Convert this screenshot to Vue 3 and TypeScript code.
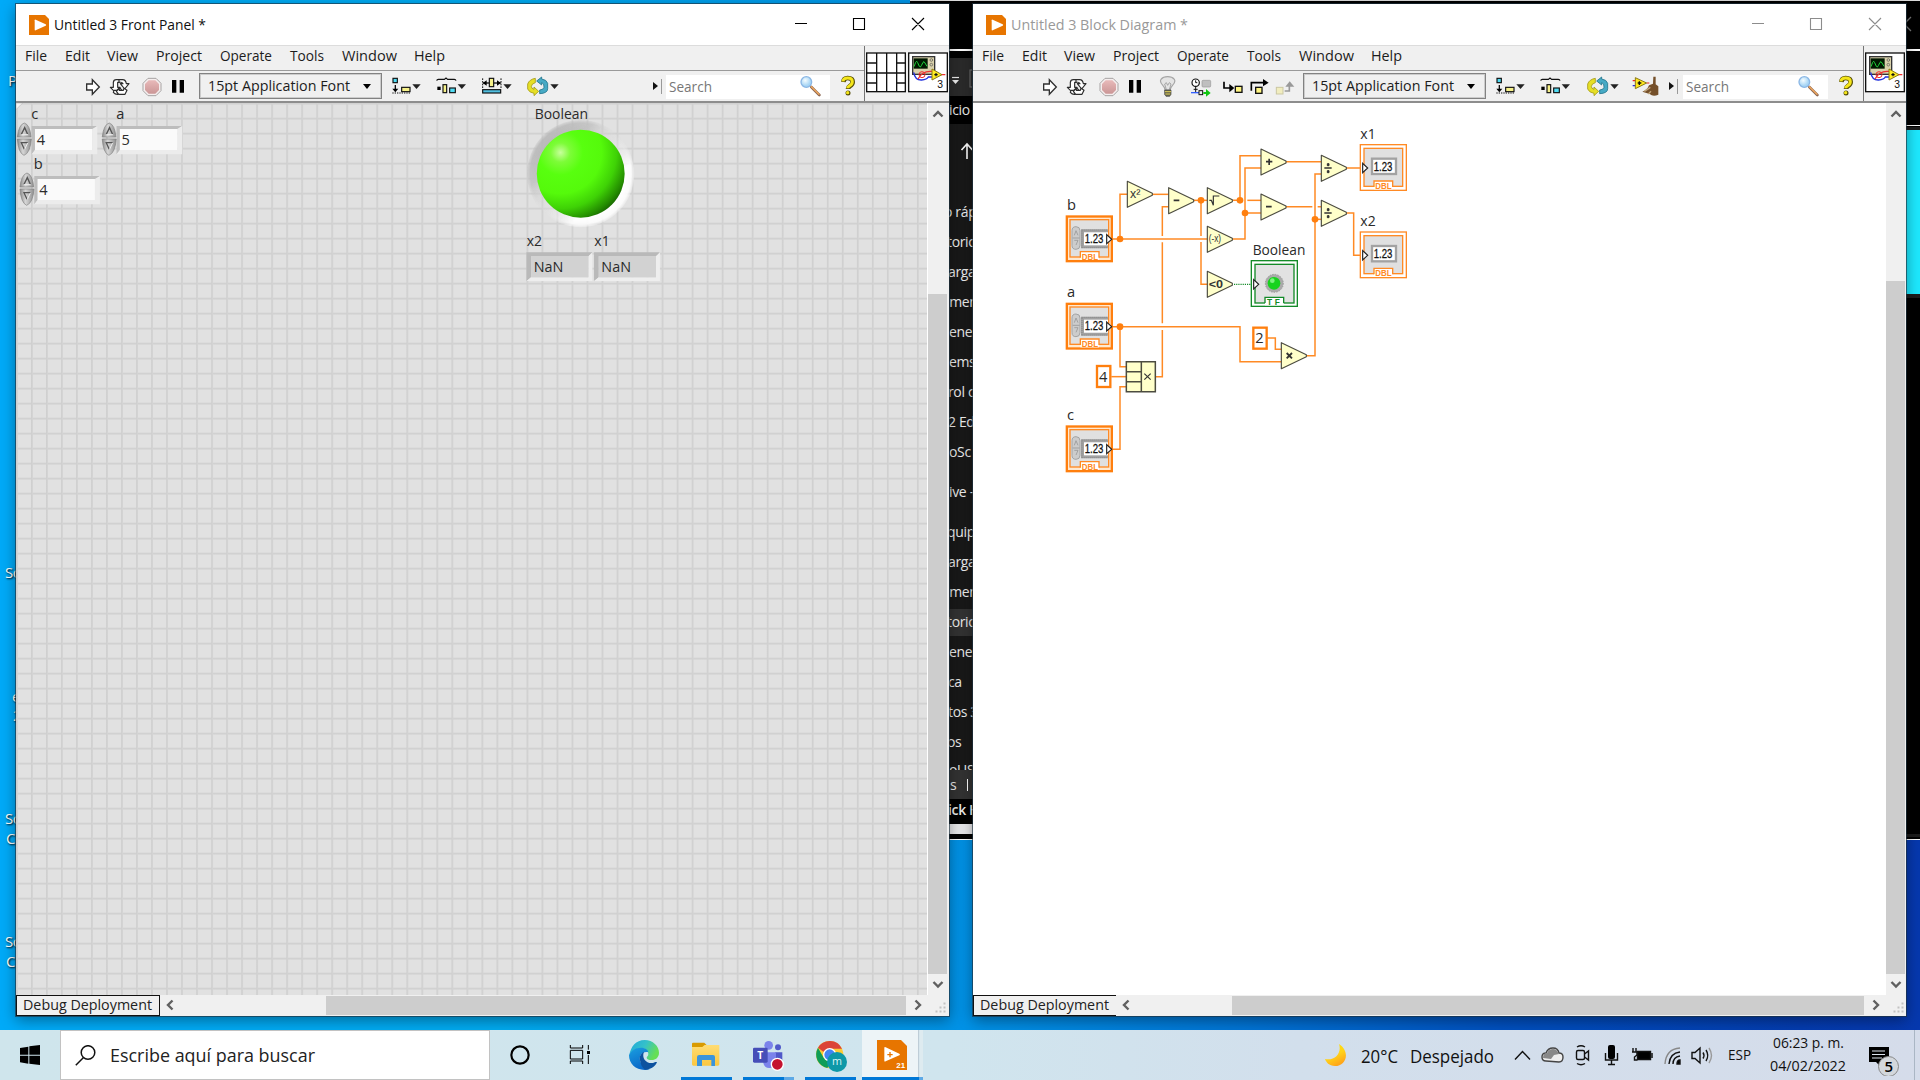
<script setup lang="ts">
import { h } from 'vue'

interface LabelProps { t: string; w: number; s?: number; c?: string; b?: number }

// One line of text fitted to a fixed advance width.
const Label = (p: LabelProps) => {
  const s = p.s ?? 15
  return h('svg', { width: p.w, height: 20, style: 'display:block;overflow:visible;flex:none' }, [
    h('text', {
      x: 0, y: 15, 'font-size': s, 'font-weight': p.b ?? 400, fill: p.c ?? '#1c1c1c', textLength: p.w,
      lengthAdjust: 'spacingAndGlyphs', 'font-family': '"Open Sans","Noto Sans",sans-serif',
    }, p.t),
  ])
}
Label.props = ['t', 'w', 's', 'c', 'b']

interface Tool { id: string; gap: number; w: number }

const menus = [
  { t: 'File', w: 22, gap: 9 }, { t: 'Edit', w: 25, gap: 18 }, { t: 'View', w: 31, gap: 17.3 },
  { t: 'Project', w: 46, gap: 17.7 }, { t: 'Operate', w: 52, gap: 18 }, { t: 'Tools', w: 34, gap: 18 },
  { t: 'Window', w: 55, gap: 18 }, { t: 'Help', w: 31, gap: 17.5 },
]
const runTools: Tool[] = [
  { id: 'run', gap: 69, w: 16 }, { id: 'loop', gap: 8, w: 22 }, { id: 'stop', gap: 9.7, w: 22 }, { id: 'pause', gap: 7.3, w: 16 },
]
const debugTools: Tool[] = [
  { id: 'bulb', gap: 16.3, w: 18 }, { id: 'highlight', gap: 12.4, w: 22 }, { id: 'into', gap: 10.3, w: 22 },
  { id: 'over', gap: 5, w: 20 }, { id: 'out', gap: 6, w: 20 },
]
const alignFront: Tool[] = [
  { id: 'align', gap: 9, w: 30 }, { id: 'dist', gap: 14.7, w: 30 }, { id: 'resize', gap: 15.7, w: 30 }, { id: 'reorder', gap: 15.3, w: 32 },
]
const alignBlock: Tool[] = [
  { id: 'align', gap: 9, w: 30 }, { id: 'dist', gap: 15, w: 30 }, { id: 'reorder', gap: 16.7, w: 32 }, { id: 'clean', gap: 13, w: 30 },
]
const windows = [
  { key: 'front', title: 'Untitled 3 Front Panel *', tw: 152, tools: runTools, align: alignFront, fontGap: 13, sepGap: 93.7, sw: 164, searchGap: 4.3 },
  { key: 'block', title: 'Untitled 3 Block Diagram *', tw: 177, tools: [...runTools, ...debugTools], align: alignBlock, fontGap: 8, sepGap: 7.3, sw: 145, searchGap: 4.3 },
]
const sideRows = [
  { y: 213, t: 'o ráp', d: -5 }, { y: 243, t: 'torio', d: -2 }, { y: 273, t: 'argas', d: -1 }, { y: 303, t: 'umen', d: -8 },
  { y: 333, t: 'enes', d: 0 }, { y: 363, t: 'ems', d: 0 }, { y: 393, t: 'rol c', d: -1 }, { y: 423, t: '2 Ed', d: -1 }, { y: 453, t: 'oSc', d: 0 },
  { y: 493, t: 'ive -', d: 0 }, { y: 533, t: 'quip', d: -2 }, { y: 563, t: 'argas', d: -1 }, { y: 593, t: 'umen', d: -8 }, { y: 623, t: 'torio', d: -2 },
  { y: 653, t: 'enes', d: 0 }, { y: 683, t: 'ca', d: -1 }, { y: 713, t: 'tos 3', d: -1 }, { y: 743, t: 'os', d: -2 },
]
const desktopLabels = [
  { t: 'P', x: 8, y: 80 }, { t: 'So', x: 5, y: 572 }, { t: 'e', x: 12, y: 696 }, { t: '2', x: 13, y: 715 },
  { t: 'So', x: 5, y: 818 }, { t: 'C', x: 6, y: 838 }, { t: 'So', x: 5, y: 941 }, { t: 'C', x: 6, y: 961 },
]
const controls = [
  { n: 'c', v: '4', x: 48, y: 365, lx: 94 }, { n: 'a', v: '5', x: 303, y: 365, lx: 349 }, { n: 'b', v: '4', x: 56, y: 515, lx: 101 },
]
const indicators = [{ n: 'x2', x: 1581 }, { n: 'x1', x: 1784 }]
const inputs = [{ n: 'b', y: 316 }, { n: 'a', y: 578 }, { n: 'c', y: 946 }]
const outputs = [{ n: 'x1', y: 102 }, { n: 'x2', y: 364 }]
const nodes = [
  { x: 232, y: 214 }, { x: 356, y: 233 }, { x: 472, y: 233 }, { x: 472, y: 349 }, { x: 472, y: 484 },
  { x: 633, y: 117 }, { x: 633, y: 252 }, { x: 814, y: 136 }, { x: 814, y: 271 }, { x: 694, y: 698 },
]
const wires = [
  'M453 271V378M453 396V523H472', 'M316 800H337V660M337 640V397M337 378V290H357', 'M188 387H472', 'M210 387V253H232',
  'M305 253H357', 'M432 271H472', 'M548 271H570V137H633', 'M592 271H633', 'M548 387H585V174H633', 'M585 309H633',
  'M708 155H813', 'M708 290H787M803 290H813', 'M768 737H795V192H813', 'M795 328H813', 'M888 174H930', 'M888 309H911V436H930',
  'M188 650H570V755H695', 'M210 650V770H228', 'M184 800H228', 'M188 1018H210V830H228', 'M652 684H676V718H695',
]
const joints = [[210, 387], [453, 271], [570, 271], [585, 309], [795, 328], [210, 650]]
</script>

<template>
  <div class="desktop">
    <svg width="0" height="0" class="defs">
      <defs>
        <radialGradient id="led" cx=".27" cy=".26" r=".85"><stop offset="0" stop-color="#c8ff9c" /><stop offset=".13" stop-color="#7dfc38" /><stop offset=".3" stop-color="#58ff0f" /><stop offset=".55" stop-color="#55fa0b" /><stop offset=".75" stop-color="#3fd206" /><stop offset=".92" stop-color="#238b00" /><stop offset="1" stop-color="#165e00" /></radialGradient>
        <linearGradient id="ring" x1=".14" y1=".14" x2=".86" y2=".86"><stop offset="0" stop-color="#b4b4b4" /><stop offset=".25" stop-color="#c2c2c2" /><stop offset=".46" stop-color="#dadada" stop-opacity=".3" /><stop offset=".6" stop-color="#eee" stop-opacity=".5" /><stop offset=".76" stop-color="#fff" /><stop offset="1" stop-color="#fff" /></linearGradient>
        <radialGradient id="ringFade"><stop offset=".8" stop-color="#fff" /><stop offset=".93" stop-color="#fff" stop-opacity=".85" /><stop offset="1" stop-color="#fff" stop-opacity=".1" /></radialGradient>
        <mask id="ringMask"><circle cx="1744" cy="521" r="163" fill="url(#ringFade)" /></mask>
        <linearGradient id="metal" x1="0" x2="1"><stop offset="0" stop-color="#8c8c8c" /><stop offset=".4" stop-color="#d6d6d6" /><stop offset="1" stop-color="#8e8e8e" /></linearGradient>
        <linearGradient id="red" x1="0" y1="0" x2="0" y2="1"><stop offset="0" stop-color="#e8b9b9" /><stop offset="1" stop-color="#cb9696" /></linearGradient>
        <radialGradient id="glass" cx=".4" cy=".35"><stop offset="0" stop-color="#f4fcff" /><stop offset="1" stop-color="#a8d6f5" /></radialGradient>
        <linearGradient id="edgeA" x1="0" y1="0" x2="1" y2=".4"><stop offset="0" stop-color="#1fa7dc" /><stop offset=".55" stop-color="#35c1c9" /><stop offset="1" stop-color="#65df55" /></linearGradient>
        <linearGradient id="edgeB" x1="0" y1="0" x2=".4" y2="1"><stop offset="0" stop-color="#1a9fe0" /><stop offset="1" stop-color="#0a68c8" /></linearGradient>
        <linearGradient id="moon" x1="0" y1="0" x2=".5" y2="1"><stop offset="0" stop-color="#ffe600" /><stop offset=".6" stop-color="#ffd21a" /><stop offset="1" stop-color="#ffa61a" /></linearGradient>
        <linearGradient id="folder" x1="0" y1="0" x2="0" y2="1"><stop offset="0" stop-color="#ffdc73" /><stop offset="1" stop-color="#fbc740" /></linearGradient>
      </defs>
      <symbol id="run" viewBox="255 213 48 90"><path d="M260 252h17v-13l21 22-21 22v-13h-17z" fill="#fff" stroke="#303030" stroke-width="4" /></symbol>
      <symbol id="loop" viewBox="327 213 66 90"><g fill="#fff" stroke="#2c2c2c" stroke-width="3.5" stroke-linejoin="round"><path d="M340 262v-15q1-8 9-8h14l-5 8h-5v15h7l-14 15-15-15z" /><path d="M357 239h11q9 0 11 12h8l-13 16-13-16h8q-2-5-12-5z" /><path d="M340 277q5 6 12 6h2v-6l14-3-9-11-9 8h-8z" /><path d="M372 265l9 6-6 12h-19l-7-9 9-9v6h12z" /></g></symbol>
      <symbol id="stop" viewBox="422 213 66 90"><path d="M443 235h24l15 15v22l-15 15h-24l-15-15v-22z" fill="#f5eeee" stroke="#a6a3a3" stroke-width="3" /><path d="M445 241h20l11 11v18l-11 11h-20l-11-11v-18z" fill="url(#red)" /></symbol>
      <symbol id="pause" viewBox="510 213 48 90"><path d="M516 240h13v38h-13zM539 240h13v38h-13z" fill="#000" /></symbol>
      <symbol id="bulb" viewBox="598 213 54 90"><path d="M616 270q0-7-6-13c-17-17-2-27 14-27s31 10 14 27q-6 6-6 13z" fill="#e4e4e4" stroke="#a5a5a5" stroke-width="3.5" /><path d="M620 269l-5-17 5-4 4 8 5-8 5 4-5 17" fill="none" stroke="#999" stroke-width="2.5" /><path d="M615 270h19v13l-4 6h-11l-4-6z" fill="#66664e" stroke="#444" stroke-width="2" /><path d="M616 275h18M617 282h15" stroke="#e0cf58" stroke-width="3" /></symbol>
      <symbol id="highlight" viewBox="689 213 66 90"><circle cx="706" cy="248" r="11" fill="#fff" stroke="#111" stroke-width="3.5" /><path d="M706 241v7h5" fill="none" stroke="#111" stroke-width="3" /><path d="M706 259v18M700 268h12" stroke="#111" stroke-width="3" /><rect x="725" y="241" width="26" height="20" rx="3" fill="#bfbfbf" stroke="#999" stroke-width="2" /><path d="M692 278h24" stroke="#3461ff" stroke-width="4" /><rect x="716" y="272" width="11" height="12" fill="#eee" stroke="#111" stroke-width="3" /><path d="M729 276h8v-9l14 12-14 11v-8h-8z" fill="#11c611" /></symbol>
      <symbol id="into" viewBox="786 213 66 90"><path d="M792 245v19h22" fill="none" stroke="#000" stroke-width="5" /><path d="M808 252l15 12-15 13z" /><rect x="826" y="259" width="20" height="18" fill="#fff582" stroke="#111" stroke-width="4" /></symbol>
      <symbol id="over" viewBox="867 213 60 90"><path d="M874 272v-24h38" fill="none" stroke="#000" stroke-width="5" /><path d="M909 237l17 11-17 11z" /><rect x="887" y="262" width="19" height="18" fill="#fff582" stroke="#111" stroke-width="4" /></symbol>
      <symbol id="out" viewBox="945 213 60 90"><path d="M974 273h14v-16" fill="none" stroke="#999" stroke-width="5" /><path d="M976 260l13-16 14 16z" fill="#999" /><rect x="949" y="262" width="20" height="20" fill="#f1edbf" stroke="#cbc7a3" stroke-width="3" /></symbol>
      <symbol id="align" viewBox="1174 213 90 90"><rect x="1180" y="235" width="13" height="13" fill="#50dcf4" stroke="#111" stroke-width="3.5" /><path d="M1187 255v15" stroke="#111" stroke-width="4" /><path d="M1178 266h18l-9 11z" /><path d="M1178 279h56" stroke="#111" stroke-width="3.5" stroke-dasharray="4 3" /><rect x="1206" y="262" width="25" height="13" fill="#f7f28a" stroke="#111" stroke-width="3.5" /><path d="M1238 253h25l-12.500 14z" fill="#222" /></symbol>
      <symbol id="dist" viewBox="1308 213 90 90"><path d="M1310 242q1-4 5-4h18l5-4 5 4h20q4 0 5 4" fill="none" stroke="#111" stroke-width="3.5" /><rect x="1312" y="260" width="10" height="10" /><rect x="1329" y="254" width="11" height="24" fill="#f7f28a" stroke="#111" stroke-width="3.5" /><rect x="1349" y="264" width="17" height="14" fill="#50dcf4" stroke="#111" stroke-width="3.5" /><path d="M1373 253h25l-12.500 14z" fill="#222" /></symbol>
      <symbol id="resize" viewBox="1445 213 90 90"><path d="M1447 235v30M1502 235v30" stroke="#111" stroke-width="3" stroke-dasharray="5 3" /><path d="M1448 249h53" stroke="#111" stroke-width="4" /><path d="M1447 249l12-8v16zM1502 249l-12-8v16z" /><rect x="1467" y="235" width="13" height="25" fill="#f7f28a" stroke="#111" stroke-width="3.5" /><rect x="1447" y="269" width="54" height="10" fill="#50bfe0" stroke="#111" stroke-width="3.5" /><path d="M1509 253h25l-12.500 14z" fill="#222" /></symbol>
      <symbol id="reorder" viewBox="1581 213 96 90"><path d="M1606 235q-18 3-23 17v15q5 11 19 13v7l14-13-14-13v7q-8-2-8-9 1-8 12-11z" fill="#e6df25" stroke="#a39a1a" stroke-width="2.5" /><path d="M1625 231l-15 12 15 12v-7q8 2 7 14-1 7-13 8v11q24-1 24-15v-16q-3-11-18-13z" fill="#47aac5" stroke="#20738b" stroke-width="2.5" /><path d="M1651 253h25l-12.500 14z" fill="#222" /></symbol>
      <symbol id="clean" viewBox="578 213 90 90"><path d="M580 257h12" stroke="#1717dd" stroke-width="3.5" /><path d="M580 242h10M622 249h8" stroke="#e22" stroke-width="3.5" /><path d="M588 233l34 16-34 17z" fill="#ffe71d" stroke="#8c7a15" stroke-width="3" /><path d="M595 249h11M600 244v11" stroke="#111" stroke-width="4" /><path d="M642 230h7v23l8 6v25q-16 7-26-2l-22-7q14-4 20-19l12-5z" fill="#75502a" /><path d="M615 274l18-12M627 282l8-8" stroke="#c1a67d" stroke-width="4" /></symbol>
      <symbol id="lens" viewBox="957 213 66 90"><path d="M994 261l24 24" stroke="#8a6550" stroke-width="8" stroke-linecap="round" /><path d="M994 260l23 23" stroke="#f0a85e" stroke-width="4" stroke-linecap="round" /><circle cx="979" cy="246" r="16" fill="url(#glass)" stroke="#8bb7e5" stroke-width="4" /></symbol>
      <symbol id="help" viewBox="1080 213 48 90"><path d="M1090 246q1-12 13-12 15 0 15 12 0 7-8 12-6 4-6 9" fill="none" stroke="#554d08" stroke-width="14" /><circle cx="1104" cy="279" r="7.500" fill="#554d08" /><path d="M1089 244q1-10 14-10 14 0 14 11 0 7-8 12-6 4-6 8" fill="none" stroke="#f4e51a" stroke-width="9" /><circle cx="1103" cy="278" r="5" fill="#f4e51a" /></symbol>
      <symbol id="vi" viewBox="1284 156 120 123"><rect x="1286" y="159" width="116" height="116" fill="#fff" stroke="#111" stroke-width="4" /><rect x="1298" y="170" width="66" height="53" fill="#d9d1ab" stroke="#333" stroke-width="4" /><rect x="1301" y="175" width="42" height="31" fill="#001800" /><path d="M1302 200l5-13q3-7 6 1l5 11q3 5 6-2l5-10q3-5 6 2l6 10" fill="none" stroke="#20d23a" stroke-width="3" /><circle cx="1354" cy="180" r="4" fill="none" stroke="#555" stroke-width="2" /><circle cx="1354" cy="194" r="4" fill="none" stroke="#555" stroke-width="2" /><path d="M1301 217q4 24 24 23 16-1 20-9h22" fill="none" stroke="#2332dd" stroke-width="4" /><path d="M1314 237q12-23 36-23h8M1380 224h16" fill="none" stroke="#f03030" stroke-width="4" /><circle cx="1326" cy="224" r="9" fill="none" stroke="#f03030" stroke-width="3" /><path d="M1356 207l30 17-30 16z" fill="#ffed22" stroke="#8d7b17" stroke-width="3" /><path d="M1363 224h10M1368 219v10" stroke="#111" stroke-width="3.5" /><text x="1372" y="265" font-size="31" textLength="17" font-family="Liberation Sans, sans-serif" fill="#111">3</text></symbol>
      <symbol id="panes" viewBox="1159 156 120 123"><rect x="1161" y="159" width="116" height="116" fill="#fff" stroke="#111" stroke-width="4" /><path d="M1191 159v116M1221 159v116M1251 159v116M1161 219h116M1161 189h30M1161 249h30M1251 189h26M1251 249h26" stroke="#111" stroke-width="4" /></symbol>
      <symbol id="lv" viewBox="0 0 60 60"><path d="M0 0h48l12 12v48H0z" fill="#e77500" /><path d="M17 16q0-3 3-2l30 14q3 2 0 4L20 46q-3 1-3-2z" fill="#fff" /></symbol>
    </svg>

    <span v-for="(d, i) in desktopLabels" :key="i" class="dlabel" :style="{ left: d.x + 'px', top: d.y - 11 + 'px' }">{{ d.t }}</span>

    <div class="backapp">
      <div class="bar1"></div>
      <div class="side">
        <div class="ribbon"><svg width="24" height="38"><path d="M4 19.500h7" stroke="#eee" stroke-width="1.200" /><path d="M4 22h7l-3.500 4z" fill="#eee" /><rect x="22" y="12" width="8" height="17" fill="none" stroke="#777" /></svg></div>
        <div class="tab">icio</div>
        <div class="list">
          <svg class="up" width="24" height="22"><path d="M19 19V4M13.500 10l5.500-6 5.500 6" fill="none" stroke="#fff" stroke-width="1.600" /></svg>
          <span v-for="r in sideRows" :key="r.y" class="row" :class="{ on: r.y === 623 }" :style="{ top: r.y - 138 + 'px', textIndent: r.d + 'px' }">{{ r.t }}</span>
          <span class="row cut">oUS</span>
        </div>
        <div class="status">s<i></i></div>
        <div class="click">ick H</div>
        <div class="edge"></div>
      </div>
      <div class="right"><svg width="15" height="46"><path d="M-1 23l7-7M-1 23l7 7" stroke="#777" stroke-width="1.300" fill="none" /></svg><div class="cyan"></div><div class="foot"></div></div>
    </div>

    <section v-for="w in windows" :key="w.key" class="win" :class="w.key">
      <header class="title">
        <svg width="20" height="20" class="logo"><use href="#lv" /></svg>
        <Label :t="w.title" :w="w.tw" :s="15" :c="w.key === 'front' ? '#111' : '#999'" />
        <svg class="sys" width="137" height="41" :stroke="w.key === 'front' ? '#000' : '#8c8c8c'" fill="none"><path d="M4 19.500h12M62.500 14.500h11v11h-11zM121 14l12 12M133 14l-12 12" stroke-width="1.100" /></svg>
      </header>
      <div class="head">
        <div class="bars">
          <nav class="menu"><Label v-for="m in menus" :key="m.t" :t="m.t" :w="m.w" :s="14.800" :style="{ marginLeft: m.gap + 'px' }" /></nav>
          <div class="tools">
            <svg v-for="t in w.tools" :key="t.id" :width="t.w" height="30" :style="{ marginLeft: t.gap + 'px' }"><use :href="'#' + t.id" /></svg>
            <div class="font" :style="{ marginLeft: w.fontGap + 'px' }"><Label t="15pt Application Font" :w="142" :s="15" /><svg width="8" height="5"><path d="M0 0h8l-4 5z" /></svg></div>
            <svg v-for="t in w.align" :key="t.id" :width="t.w" height="30" :style="{ marginLeft: t.gap + 'px' }"><use :href="'#' + t.id" /></svg>
            <svg width="9" height="30" :style="{ marginLeft: w.sepGap + 'px' }"><path d="M0 11v8l5-4z" fill="#111" /><path d="M8.500 8v15" stroke="#999" /></svg>
            <div class="search" :style="{ width: w.sw + 'px', marginLeft: w.searchGap + 'px' }"><Label t="Search" :w="43" :s="15" c="#777" /><svg class="lens" width="22" height="30"><use href="#lens" /></svg></div>
            <svg class="q" width="16" height="30"><use href="#help" /></svg>
          </div>
        </div>
        <div class="panes"><svg v-if="w.key === 'front'" width="40" height="41"><use href="#panes" /></svg><svg width="40" height="41"><use href="#vi" /></svg></div>
      </div>

      <div class="body">
        <svg v-if="w.key === 'front'" class="canvas grid" viewBox="48 309 2736 2676" width="912" height="892" preserveAspectRatio="none">
          <path d="M48 309h20l-20 20z" fill="#f4f4f4" stroke="#bbb" stroke-width="2" />
          <g v-for="c in controls" :key="c.n">
            <text :x="c.lx" :y="c.y - 9" class="t45">{{ c.n }}</text>
            <g :transform="`translate(${c.x} ${c.y})`">
              <path d="M47 13h197l-12 9H57v63l-10 13z" fill="#bdbdbd" />
              <path d="M244 13v85H47l10-13h172V22z" fill="#ececec" />
              <rect x="57" y="22" width="172" height="63" fill="#fafafa" />
              <path d="M25 4q17 5 20 42H4Q8 9 25 4zM4 52h42q-3 42-22 49Q7 94 4 52z" fill="url(#metal)" stroke="#808080" stroke-width="2" />
              <path d="M16 38l10-20 9 20" fill="none" stroke="#555" stroke-width="4" /><path d="M16 39h20" stroke="#eee" stroke-width="3" />
              <path d="M35 63H16l9 20" fill="none" stroke="#555" stroke-width="4" /><path d="M26 83l9-19" stroke="#eee" stroke-width="3" />
              <text x="62" y="70" class="t45">{{ c.v }}</text>
            </g>
          </g>
          <circle cx="1744" cy="521" r="161" fill="url(#ring)" mask="url(#ringMask)" />
          <circle cx="1744" cy="521" r="132" fill="url(#led)" />
          <text x="1606" y="356" textLength="160" lengthAdjust="spacingAndGlyphs" class="t45">Boolean</text>
          <g v-for="n in indicators" :key="n.n">
            <text :x="n.x + 1" y="739" textLength="46" lengthAdjust="spacingAndGlyphs" class="t45">{{ n.n }}</text>
            <g :transform="`translate(${n.x} 757)`"><path d="M0 0h198l-12 12H14v63L0 87z" fill="#b9b9b9" /><path d="M198 0v86H0l14-11h172V12z" fill="#eee" /><rect x="14" y="11" width="172" height="64" fill="#d2d2d2" /><text x="22" y="60" textLength="89" lengthAdjust="spacingAndGlyphs" class="t45">NaN</text></g>
          </g>
        </svg>

        <svg v-else class="canvas" viewBox="-231 -21 2739 2676" width="913" height="892">
          <g fill="none" stroke="#ff8a24" stroke-width="4.500"><path v-for="p in wires" :key="p" :d="p" /></g>
          <path d="M552 523h52" stroke="#138a28" stroke-width="3.500" stroke-dasharray="3.500 3" />
          <circle v-for="j in joints" :key="j.join()" :cx="j[0]" :cy="j[1]" r="10" fill="#ff7f0e" />
          <path v-for="(n, i) in nodes" :key="i" :d="`M${n.x} ${n.y}l75 36v6l-75 36z`" fill="#ffffca" stroke="#4c4c40" stroke-width="3.500" stroke-linejoin="round" />
          <text x="240" y="265" class="sym" font-size="36" textLength="31" lengthAdjust="spacingAndGlyphs">x²</text>
          <path d="M371 271h17M648 290h17M648 155h19M657.500 146v19M823 174h22M823 309h22" stroke="#333" stroke-width="5" />
          <path d="M832 161h5v6h-5zM832 182h5v6h-5zM832 296h5v6h-5zM832 317h5v6h-5z" stroke="#333" stroke-width="3" fill="#333" />
          <path d="M710 729l16 16M726 729l-16 16" stroke="#333" stroke-width="5.500" />
          <path d="M478 271h6l6 15v-28h18" fill="none" stroke="#333" stroke-width="3.500" />
          <text x="476" y="397" class="sym" font-size="33" textLength="37" lengthAdjust="spacingAndGlyphs">(-x)</text>
          <text x="476" y="535" font-weight="700" class="sym" font-size="34" textLength="43" lengthAdjust="spacingAndGlyphs">&lt;0</text>
          <path d="M229 755h87v90h-87zM274 755v90M229 785h45M229 815h45" fill="#ffffca" stroke="#4c4c40" stroke-width="4.500" />
          <path d="M283 791l19 18M302 791l-19 18" stroke="#333" stroke-width="3.500" />
          <g fill="#fff" stroke="#ff7f0e" stroke-width="7"><rect x="610" y="653" width="40" height="63" /><rect x="141" y="768" width="40" height="63" /></g>
          <text x="616" y="700" class="t45">2</text><text x="147" y="816" class="t45">4</text>

          <g v-for="n in inputs" :key="n.n" :transform="`translate(47 ${n.y})`">
            <text x="4" y="-17" class="t45">{{ n.n }}</text>
            <rect x="3.500" y="3.500" width="135" height="134" fill="#ffe9d0" stroke="#ff7f0e" stroke-width="7" />
            <rect x="13" y="13" width="116" height="112" fill="#e0e0e0" stroke="#ff8a24" stroke-width="4" />
            <path d="M46 42h81v10H56v37h71v10H46z" fill="#a2a2a2" />
            <path d="M48 44h78M48 97h78M49 46v50" stroke="#858585" stroke-width="3" stroke-dasharray="3 3" />
            <rect x="55" y="51" width="72" height="39" fill="#fff" />
            <rect x="19" y="34" width="24" height="68" rx="12" fill="#ccc" stroke="#a4a4a4" stroke-width="3" /><path d="M26 60l5-14 6 14M26 75h11l-6 14M21 68h21" fill="none" stroke="#999" stroke-width="2.500" />
            <text x="57" y="83" textLength="56" lengthAdjust="spacingAndGlyphs" class="num">1.23</text>
            <path d="M123 58v27l15-13z" fill="#fff" stroke="#222" stroke-width="3.500" />
            <path d="M44 134v-25h56v25z" fill="#fff" /><path d="M44 127v-18h56v18" fill="none" stroke="#ff8a24" stroke-width="4" /><text x="48" y="133" textLength="49" lengthAdjust="spacingAndGlyphs" class="tag">DBL</text>
          </g>
          <g v-for="n in outputs" :key="n.n" :transform="`translate(929 ${n.y})`">
            <text x="2" y="-16" textLength="46" lengthAdjust="spacingAndGlyphs" class="t45">{{ n.n }}</text>
            <rect x="2" y="2" width="138" height="137" fill="#fff" stroke="#ff8a24" stroke-width="4" />
            <rect x="13" y="13" width="116" height="114" fill="#e0e0e0" stroke="#ff8a24" stroke-width="4" />
            <rect x="37" y="44" width="72" height="46" fill="#fff" stroke="#a2a2a2" stroke-width="7" />
            <text x="42" y="81" textLength="56" lengthAdjust="spacingAndGlyphs" class="num">1.23</text>
            <path d="M9 58v28l15-14z" fill="#fff" stroke="#222" stroke-width="3.500" />
            <path d="M43 136v-25h56v25z" fill="#fff" /><path d="M43 129v-18h56v18" fill="none" stroke="#ff8a24" stroke-width="4" /><text x="47" y="135" textLength="49" lengthAdjust="spacingAndGlyphs" class="tag">DBL</text>
          </g>
          <g transform="translate(602 450)">
            <text x="6" y="-16" textLength="158" lengthAdjust="spacingAndGlyphs" class="t45">Boolean</text>
            <rect x="2" y="2" width="138" height="137" fill="#fff" stroke="#138a28" stroke-width="4" />
            <rect x="13" y="13" width="117" height="116" fill="#e2e2e2" stroke="#138a28" stroke-width="4" />
            <circle cx="71" cy="70" r="27" fill="#aaa" stroke="#999" stroke-width="3" stroke-dasharray="4 4" /><circle cx="70" cy="70" r="19" fill="#17d31d" /><circle cx="65" cy="62" r="7" fill="#7cf27e" />
            <path d="M9 59v28l15-14z" fill="#fff" stroke="#222" stroke-width="3.500" />
            <path d="M43 136v-24h56v24z" fill="#fff" /><path d="M43 129v-17h56v17" fill="none" stroke="#138a28" stroke-width="4" /><text x="49" y="134" class="tag tf">TF</text>
          </g>
        </svg>
        <div class="vs"><svg width="20" height="22"><path d="M5.500 13.500l4.500-4.500 4.500 4.500" /></svg><div class="vthumb"></div><svg width="20" height="21"><path d="M5.500 8l4.500 4.500 4.500-4.500" /></svg></div>
      </div>
      <footer class="hs">
        <div class="dd"><Label t="Debug Deployment" :w="129" :s="14.800" c="#222" /></div>
        <svg class="la" width="14" height="20"><path d="M9.500 5.500l-4.500 4.500 4.500 4.500" /></svg>
        <div class="hthumb"></div>
        <svg width="42" height="20"><path d="M9.500 5.500l4.500 4.500-4.500 4.500" /><path d="M29 15h3v3h-3zM33 15h3v3h-3zM37 15h3v3h-3zM33 11h3v3h-3zM37 11h3v3h-3zM37 7h3v3h-3z" class="grip" /></svg>
      </footer>
    </section>

    <div class="taskbar">
      <div class="start"><svg width="20" height="20" viewBox="0 0 60 60"><path d="M0 9l25-4v24H0zM28 4l32-4v29H28zM0 32h25v24L0 52zM28 32h32v28l-32-4z" /></svg></div>
      <div class="find"><svg width="21" height="21"><g fill="none" stroke="#111" stroke-width="1.500"><circle cx="13" cy="7.500" r="6.800" /><path d="M8.500 12.500L.8 20.200" /></g></svg><Label t="Escribe aquí para buscar" :w="205" :s="19" c="#222" /></div>
      <svg class="apps" width="433" height="50" viewBox="30 210 1299 150">
        <rect x="1146" y="210" width="169" height="142" fill="#edf4f7" /><path d="M1316 210v142" stroke="#b9c8d2" stroke-width="3" /><rect x="1318" y="210" width="11" height="142" fill="#deebf0" />
        <circle cx="120" cy="285" r="26" fill="none" stroke="#000" stroke-width="6.500" />
        <path d="M271 255v9h37v-9M271 312v-9h37v9M271 271h37v26h-37zM325 255v14M325 285v27" fill="none" stroke="#000" stroke-width="3" /><rect x="321" y="273" width="9" height="9" />
        <path d="M448 286c4-27 20-46 46-46 25 0 43 19 43 38 0 14-10 22-22 22-9 0-15-3-15-7 0-3 5-4 5-11 0-10-9-17-20-17-17 0-31 8-37 21z" fill="url(#edgeA)" />
        <path d="M447 286c5-13 18-23 36-23 14 0 22 8 22 14-18-4-28 10-25 24 3 15 17 22 29 27-35 8-62-12-62-42z" fill="url(#edgeB)" />
        <path d="M480 301c-3-11 2-20 12-26-8 19 6 36 26 34 6-1 10-4 13-2-7 15-23 23-36 22-9-6-13-16-15-28z" fill="#0d529f" />
        <path d="M636 250q0-2 3-2h34l6 6v20h-43z" fill="#d99a00" /><path d="M636 261h31l7-6h44v58q0 4-4 4h-74q-4 0-4-4z" fill="url(#folder)" /><path d="M651 318v-27q0-6 7-6h41q6 0 6 6v27h-11v-18h-28v18z" fill="#3b94dc" />
        <circle cx="866" cy="256" r="13" fill="#7b83eb" /><circle cx="894" cy="262" r="9" fill="#5059c9" /><path d="M885 277h22v23q0 12-12 18h-15z" fill="#5059c9" /><path d="M850 277h38v32q-3 15-20 15-15 0-18-15z" fill="#7b83eb" /><rect x="819" y="263" width="44" height="45" rx="4" fill="#464eb8" /><text x="832" y="296" font-family="Open Sans, sans-serif" font-size="31" font-weight="700" fill="#fff">T</text><circle cx="892" cy="313" r="18" fill="#c4122f" stroke="#fff" stroke-width="4" />
        <circle cx="1049" cy="284" r="41" fill="#fccb35" /><path d="M1014 263a41 41 0 0 1 72 3h-37l-19 9z" fill="#db4437" /><path d="M1014 263a41 41 0 0 0 28 61l17-30-28-1z" fill="#0f9d58" /><circle cx="1049" cy="284" r="18" fill="#4285f4" stroke="#fff" stroke-width="4" /><circle cx="1071" cy="306" r="30" fill="#0e98a8" /><text x="1056" y="315" font-family="Open Sans, sans-serif" font-size="34" textLength="30" lengthAdjust="spacingAndGlyphs" fill="#dff5f5">m</text>
        <path d="M1191 240h72l18 18v72h-90z" fill="#e77500" /><path d="M1213 264q0-4 4-2l41 19q4 3 0 5l-41 18q-4 2-4-2z" fill="#fff" /><path d="M1222 284h16M1230 276v16" stroke="#e77500" stroke-width="4" /><text x="1249" y="324" font-family="Liberation Sans, sans-serif" font-size="24" font-weight="700" fill="#fff">21</text>
        <path d="M603 351h153v9h-153zM789 351h123v9h-123zM975 351h153v9h-153zM1146 351h171v9h-171z" fill="#0078d7" /><path d="M912 351h30v9h-30zM1317 351h12v9h-12z" fill="#5ea9e6" />
      </svg>
      <div class="tray">
        <svg width="22" height="24" viewBox="0 0 22 24"><path d="M14 1c12 8 7 22-4 22C4 23 1 19 0 16c10 2 17-6 14-15z" fill="url(#moon)" /></svg>
        <Label class="deg" t="20°C" :w="37" :s="18" c="#111" /><Label class="desp" t="Despejado" :w="84" :s="18" c="#111" />
        <svg class="icons" width="200" height="30" fill="none" stroke="#111" stroke-width="1.400">
          <path d="M1 19.500l7.500-8 7.500 8" />
          <path d="M32 21q-4 0-4-4t4-4q2-5 7-5t6 5q4 0 4 4 0 5-4 5z" fill="#eee" stroke="#444" stroke-width="1.400" /><path d="M33 13q2-4 6-4t6 5l-5 1-3 4-8-1q0-5 4-5z" fill="#888" stroke="none" />
          <rect x="62.500" y="10.500" width="8" height="9" rx="1.500" /><path d="M70.500 14l4-3v9l-4-3M63 7q4-2.500 8 0M63 23.500q4 2.500 8 0" />
          <rect x="94" y="5" width="7" height="14" rx="2" fill="#000" stroke="none" /><path d="M91.500 13v7h12v-7M97.500 20v4M94 24.500h7" />
          <path d="M123.500 11.500h13v8h-13z" fill="#000" /><path d="M138 13v5" stroke-width="1.500" /><path d="M119 8v4M122 8v4M118 12h5v3l-2.500 2v3h3" />
          <path d="M151 24q1-15 15-16" stroke="#888" /><path d="M155 24q1-11 11-12M159 24q0-7 7-8" /><path d="M163 24q0-4 3-4v4z" fill="#000" />
          <path d="M178 12.500h3l5-4.500v15l-5-4.500h-3z" /><path d="M189 12.500q2 3 0 6M192 10q3.500 5.500 0 11" /><path d="M195 8q5 7.500 0 15" stroke="#999" />
        </svg>
        <Label class="esp" t="ESP" :w="23" :s="14.500" c="#111" />
        <div class="clock"><Label t="06:23 p. m." :w="71" :s="15" c="#111" /><Label t="04/02/2022" :w="76" :s="15" c="#111" /></div>
        <svg class="note" width="34" height="34"><path d="M1 5h20v15h-8v5l-5-5H1z" fill="#000" /><path d="M4 9h13M4 12.500h13M4 16h10" stroke="#dce3ed" /><circle cx="20.500" cy="24.500" r="10" fill="#d3d7dc" stroke="#888" /><text x="16.500" y="30" font-size="15" font-weight="600" font-family="Open Sans, sans-serif">5</text></svg>
      </div>
    </div>
  </div>
</template>

<style>
html, body { overflow: hidden; }
</style>
<style scoped>
* { box-sizing: border-box; }
.desktop { position: relative; width: 1920px; height: 1080px; overflow: hidden; font-family: "Open Sans", "Noto Sans", sans-serif; background: linear-gradient(90deg, #00aaf8 0, #00aaf0 500px, #0092e6 960px, #0073d4 1250px, #0050bf 1500px, #043cb0 1800px, #0638ae 1920px); }
.defs { position: absolute; }
svg { flex: none; }
.dlabel { position: absolute; color: #fff; font-size: 15px; line-height: 22px; letter-spacing: -.5px; text-shadow: 1px 1px 2px #000; }
.backapp { position: absolute; left: 910px; top: 0; width: 1010px; height: 840px; background: #000; border-bottom: 1px solid #fff; border-top: 1px solid #ddd; display: flex; justify-content: space-between; }
.bar1 { position: absolute; top: 48px; left: 0; right: 0; height: 2px; background: #fff; }
.side { width: 26px; margin-left: 38px; padding-top: 57px; overflow: hidden; color: #eee; font-size: 14px; letter-spacing: -.35px; white-space: nowrap; }
.ribbon { height: 38px; background: #2b2b2b; }
.tab { height: 28px; line-height: 28px; text-indent: 1px; background: #000; }
.list { position: relative; height: 646px; background: #191919; overflow: hidden; }
.up { position: absolute; left: 0; top: 16px; }
.row { position: absolute; left: 1px; width: 25px; height: 27px; line-height: 26px; }
.row.on { background: #333; left: 0; padding-left: 1px; }
.cut { top: 633px; }
.status { display: flex; align-items: center; height: 29px; background: #333; padding-left: 2px; gap: 11px; }
.status i { width: 1px; height: 12px; background: #fff; }
.click { height: 25px; line-height: 22px; font-weight: 600; }
.edge { height: 10px; background: #e9e9eb; }
.right { width: 16px; padding-left: 1px; }
.right svg { display: block; }
.cyan { margin-top: 80px; height: 171px; border-top: 3px solid #1c1c1c; border-bottom: 4px solid #1c1c1c; background: #1de9ff; box-shadow: 0 -1px 0 #000, 0 -2px 0 #fff; }
.foot { height: 3px; margin-top: 536px; background: #1c1c1c; }
.win { position: absolute; top: 4px; height: 1012px; background: #f0f0f0; display: flex; flex-direction: column; box-shadow: 0 0 0 1px rgba(30, 50, 65, .65), 0 4px 14px rgba(0, 0, 0, .4); }
.front { left: 16px; width: 933px; }
.block { left: 973px; width: 933px; }
.title { height: 41px; background: #fff; display: flex; align-items: center; padding-left: 13px; }
.title .logo { margin-right: 5px; }
.sys { margin-left: auto; margin-right: 21px; }
.head { height: 58px; display: flex; border-top: 1px solid #dcdcdc; border-bottom: 2px solid #8d8d8d; }
.bars { flex: 1; min-width: 0; }
.menu { display: flex; height: 25px; align-items: center; border-bottom: 1px solid #9a9a9a; padding-bottom: 4px; }
.tools { display: flex; height: 30px; align-items: center; }
.font { width: 183.300px; height: 26px; border: 1px solid #828282; box-shadow: inset 0 0 0 1px #ccc; display: flex; align-items: center; justify-content: space-between; padding: 0 10px 0 8px; flex: none; }
.font svg:last-child { margin-top: 1px; }
.search { height: 24px; margin-top: 1px; background: #fff; display: flex; align-items: center; justify-content: space-between; padding: 0 9px 0 3px; flex: none; }
.lens { margin-top: -1px; }
.q { margin-left: 10px; }
.panes { border-left: 1px solid #747474; padding: 6px 1px 0 1px; display: flex; gap: 2px; }
.body { height: 892px; display: flex; overflow: hidden; }
.canvas { display: block; background: #fff; }
.front .grid { background-color: #e1e1e1; background-size: 15.020px 15px; background-position: 0 -.3px; background-image: linear-gradient(90deg, #d2d2d2 0, #cdcdcd 1px, #d6d6d6 1.600px, transparent 2.200px), linear-gradient(#d2d2d2 0, #cdcdcd 1px, #d6d6d6 1.600px, transparent 2.200px); border-right: 1px solid #fff; }
.vs { width: 20px; display: flex; flex-direction: column; background: #f0f0f0; }
.vs path, .hs path { fill: none; stroke: #606060; stroke-width: 2.400; }
.vthumb { margin: 156px 1px 0 0; flex: 1; background: #cdcdcd; }
.front .vthumb { margin-top: 169px; }
.hs { height: 21px; display: flex; }
.dd { width: 144px; height: 21px; border: 1px solid #111; padding-left: 6px; }
.block .dd { border-right: 0; width: 143px; }
.dd svg { margin-top: -1px; }
.la { margin-left: 3px; }
.hthumb { margin: 1px 0 1px 149px; height: 19px; width: 580px; background: #cdcdcd; }
.block .hthumb { width: 633px; margin-left: 99px; }
.hs .grip { fill: #c2c2c2; stroke: #f0f0f0; stroke-width: 1; }
.t45 { font: 44px "Open Sans", "Noto Sans", sans-serif; fill: #2a2a2a; }
.sym { font-family: "Liberation Sans", sans-serif; fill: #333; }
.num { font: 37px "Liberation Sans", sans-serif; fill: #111; stroke: #111; stroke-width: .8px; }
.tag { font: 700 27px "Liberation Sans", sans-serif; fill: #ff8a24; }
.tf { fill: #138a28; font-size: 25px; letter-spacing: 8px; }
.taskbar { position: absolute; left: 0; top: 1030px; width: 1920px; height: 50px; display: flex; background: linear-gradient(90deg, #cfe5ec, #d0e5ee 950px, #d2dfec 1300px, #d5dcea 1920px); }
.start { width: 60px; display: flex; align-items: center; justify-content: center; }
.find { width: 430px; height: 50px; background: #fff; border: 1px solid #c2c2c2; display: flex; align-items: center; padding-left: 14px; gap: 14px; }
.find svg:last-child { margin-top: 3px; }
.apps { display: block; }
.tray { flex: 1; display: flex; align-items: center; padding-left: 402px; }
.deg { margin-left: 14px; margin-top: 5px; }
.desp { margin-left: 12px; margin-top: 5px; }
.icons { margin-left: 20px; }
.esp { margin-left: 14px; }
.clock { margin-left: 17px; width: 80px; height: 50px; display: flex; flex-direction: column; align-items: center; padding-top: 3px; gap: 3px; }
.note { margin-left: 20px; margin-top: 7px; }
.tray::after { content: ""; width: 1px; height: 50px; background: #aab6c4; margin-left: auto; margin-right: 5px; }
</style>
